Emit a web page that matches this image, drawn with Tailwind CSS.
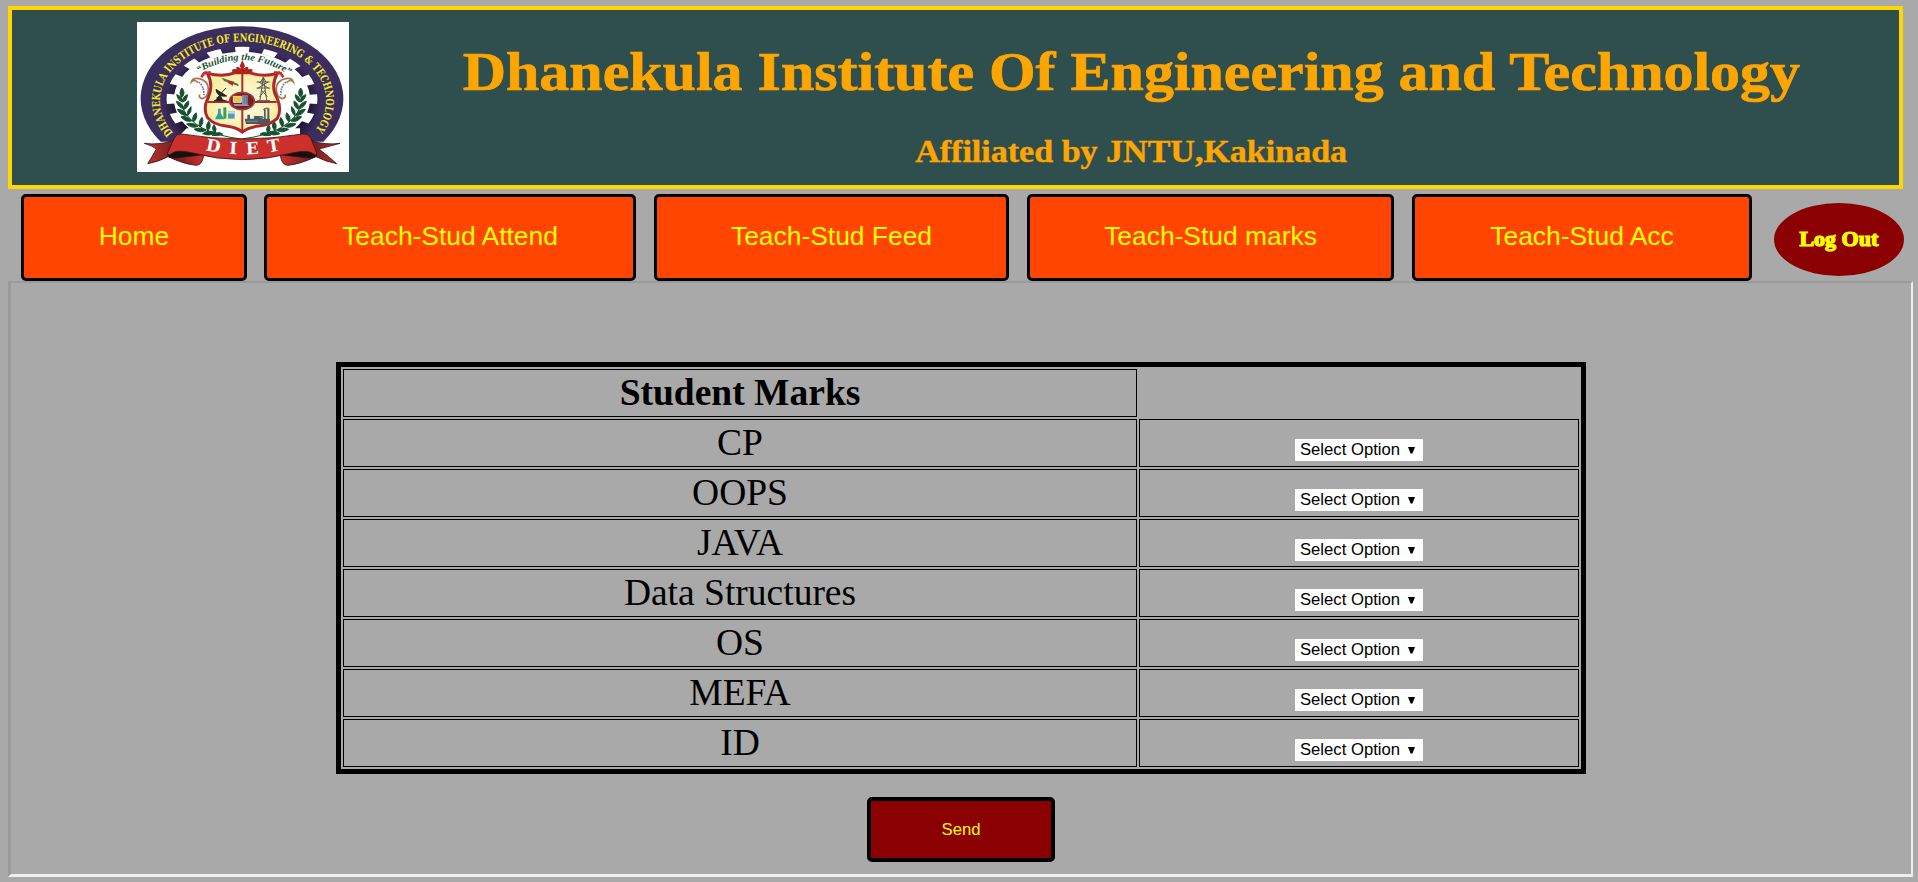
<!DOCTYPE html>
<html lang="en">
<head>
<meta charset="utf-8">
<title>Student Marks</title>
<script src="https://cdn.jsdelivr.net/npm/@tailwindcss/browser@4"></script>
</head>
<body class="h-[882px] overflow-hidden bg-[#a9a9a9] pt-1.5 pl-2 font-['Liberation_Sans',sans-serif]">
<header class="flex h-[183px] w-[1895px] border-4 border-[#ffd700] bg-[#2f4f4f] pt-3 pl-[125px] text-[#ffa500]">
  <svg class="h-[150px] w-[212px] shrink-0" viewBox="411 66 636 450" preserveAspectRatio="none">
    <defs>
      <path id="ring" d="M520 399 A249 178 0 1 1 938 399"/>
      <path id="motto" d="M596 219 Q727 140 862 221"/>
      <path id="band" d="M616 450 Q727 476 846 450"/>
      <g id="laurel" fill="#17512f" stroke="#17512f" stroke-width="3" stroke-linejoin="round">
        <path d="M546 320 Q580 400 724 417" fill="none"/>
        <path d="M546 264q-12 14 0 28q12-14 0-28zM530 284q4 18 18 22q-1-18-18-22zM562 284q-14 4-14 22q14-4 14-22zM529 304q6 20 23 22q-4-18-23-22zM566 303q-16 8-13 25q15-8 13-25zM532 328q10 20 29 18q-8-18-29-18zM573 320q-14 12-10 27q14-12 10-27zM543 350q13 18 32 13q-12-17-32-13zM588 338q-15 14-8 28q15-12 8-28zM560 372q16 15 34 7q-15-14-34-7zM606 352q-13 15-6 29q14-13 6-29zM582 388q19 13 36 3q-18-12-36-3zM626 364q-12 15-2 28q12-14 2-28zM608 401q22 9 37-3q-20-10-37 3zM642 374q-10 14 4 25q6-13-4-25zM636 406q18 4 32-4q-16-10-32 4z"/>
      </g>
      <linearGradient id="tail"><stop stop-color="#c8322e"/><stop offset=".55" stop-color="#6d1f20"/><stop offset="1" stop-color="#cf302c"/></linearGradient>
      <radialGradient id="cream"><stop stop-color="#fffef0"/><stop offset="1" stop-color="#f7eda0"/></radialGradient>
      <radialGradient id="rim" gradientUnits="userSpaceOnUse" cx="0" cy="0" r="1" gradientTransform="translate(726 312) scale(304 217)"><stop offset=".62" stop-color="#171126"/><stop offset=".78" stop-color="#3c2d60"/></radialGradient>
    </defs>
    <rect x="411" y="66" width="636" height="450" fill="#fff"/>
    <path d="M482 425 A304 217 0 1 1 970 425Z" fill="url(#rim)"/>
    <g transform="translate(726 297) scale(2.02 1.4)">
      <circle r="101" fill="#fff"/>
      <circle r="106" fill="none" stroke="#fff" stroke-width="12" pathLength="32" stroke-dasharray="1 1" stroke-dashoffset=".5"/>
    </g>
    <path d="M560 385H900V425H520Z" fill="#fff"/>
    <text fill="#f4ec27" font-family="DejaVu Serif" font-weight="bold" font-size="33"><textPath href="#ring" textLength="876" lengthAdjust="spacingAndGlyphs">DHANEKULA INSTITUTE OF ENGINEERING &amp; TECHNOLOGY</textPath></text>
    <text fill="#17512f" font-family="Liberation Serif" font-weight="bold" font-style="italic" font-size="29"><textPath href="#motto" textLength="288" lengthAdjust="spacingAndGlyphs">“Building the Future”</textPath></text>
    <use href="#laurel"/>
    <use href="#laurel" transform="translate(1448 0) scale(-1 1)"/>
    <g fill="none" stroke="#a17a45" stroke-width="5">
      <path d="M594 248q-10-12-20-2q4-14 24-10q26 6 27 31q0 25-18 29q-12-2-8-12"/>
      <path d="M860 248q10-12 20-2q-4-14-24-10q-26 6-27 31q0 25 18 29q12-2 8-12"/>
    </g>
    <g fill="none" stroke="#6f6aa8" stroke-width="5" stroke-dasharray="5 3">
      <path d="M596 247q15 8 16 39M858 247q-15 8-16 39"/>
    </g>
    <path d="M622 220Q670 232 706 218H748Q790 232 832 220Q810 260 832 296Q846 330 832 355Q812 374 776 378Q744 382 727 396Q710 382 678 378Q640 374 622 352Q608 324 624 294Q642 256 622 220Z" fill="url(#cream)" stroke="#ad2828" stroke-width="9"/>
    <path d="M727 216V392M624 306H830" stroke="#b02a28" stroke-width="6"/>
    <path d="M727 180l8 18l-5 8q18-12 15 2q16-4 12 8l-30 6l-30-6q-4-12 12-8q-3-14 15-2l-5-8z" fill="#b3211f"/>
    <path d="M604 232l8-12l20-3M850 232l-8-12l-20-3" fill="none" stroke="#d8281f" stroke-width="8"/>
    <ellipse cx="726" cy="303" rx="37" ry="26" fill="#6c2526" stroke="#b53331" stroke-width="5"/>
    <path d="M700 289h24v18h-24z" fill="#f6c427" stroke="#ddd" stroke-width="3"/>
    <path d="M726 286h17v26h-17zM700 312h42l6 6h-44z" fill="#8d94b5"/>
    <path d="M733 288v23M739 288v23" stroke="#4c5378" stroke-width="2"/>
    <path d="M648 268q2 24 32 20zM661 282l17-18M642 302h38M660 284l-14 18h22zM650 292l24 10" stroke="#252525" stroke-width="3" fill="#252525"/>
    <path d="M664 233l20 6l4 10l-15-5zM700 246l15 6v7l-15-6z" fill="#55784b"/>
    <path d="M683 240l20 5l-5 12l-13-7z" fill="#b62d25"/>
    <path d="M790 232L780 300M790 232L800 300M770 246H809M770 264H809M776 246l32 20M804 246l-32 20M784 270l18 20M796 270l-18 20M772 302H810M782 246l8-14l8 14" fill="none" stroke="#565656" stroke-width="3"/>
    <path d="M654 326h8v14l11 18h-28l9-18z" fill="#26a3a0"/>
    <path d="M670 322h9v34h-9z" fill="#36a53d"/>
    <path d="M684 334h20v22h-20z" fill="#4d9fb9"/>
    <path d="M684 334h20v7h-20z" fill="#b9dfe3"/>
    <path d="M734 356h76v16h-72zM742 344h8v14h-8zM762 348h26v12h-26zM792 324h5v35h-5zM802 326h6v34h-6z" fill="#505761"/>
    <path d="M740 364h34M778 352h20" stroke="#4f89a8" stroke-width="4"/>
    <path d="M790 330q8-9 18-3" fill="none" stroke="#777" stroke-width="4"/>
    <g stroke="#351313" stroke-width="2.5" stroke-linejoin="round">
      <path d="M520 422Q476 436 433 430Q457 437 469 447Q457 469 443 491Q477 485 504 470Q551 492 588 496Q607 496 611 466L528 440Z" fill="url(#tail)"/>
      <path d="M932 422Q978 436 1020 430Q996 437 957 447Q986 469 1010 491Q977 485 948 470Q901 492 864 496Q845 496 841 466L925 440Z" fill="url(#tail)"/>
      <path d="M503 461Q500 474 524 474Q560 470 611 464V452L520 450Z" fill="#16110f"/>
      <path d="M949 461Q952 474 928 474Q892 470 841 464V452L932 450Z" fill="#16110f"/>
      <path d="M545 402Q726 432 908 402Q924 400 932 414L950 458Q949 470 938 460Q922 450 881 458Q726 500 574 458Q531 448 516 460Q502 470 503 458L522 416Q530 400 545 402Z" fill="#cb302c"/>
    </g>
    <text fill="#fff" font-family="DejaVu Serif" font-weight="bold" font-size="50"><textPath href="#band" textLength="228">DIET</textPath></text>
  </svg>
  <div class="ml-[92px] flex w-[1380px] flex-col items-center font-['Liberation_Serif',serif] font-bold whitespace-nowrap">
    <h1 class="mt-[18px] origin-center scale-x-[1.11] text-[54px] leading-[64px] [-webkit-text-stroke:0.7px_#ffa500]">Dhanekula Institute Of Engineering and Technology</h1>
    <h2 class="mt-[29px] origin-center scale-x-[1.063] text-[32px] leading-[36px] [-webkit-text-stroke:0.4px_#ffa500]">Affiliated by JNTU,Kakinada</h2>
  </div>
</header>
<nav class="mt-[5px] flex h-[87px] pl-[13px] text-[26.4px] text-[#ffff00]">
  <a class="flex h-[87px] w-[226px] items-center justify-center rounded-[5px] border-3 border-black bg-[#ff4500] pb-[2px]">Home</a>
  <a class="ml-[17px] flex h-[87px] w-[372px] items-center justify-center rounded-[5px] border-3 border-black bg-[#ff4500] pb-[2px]">Teach-Stud Attend</a>
  <a class="ml-[18px] flex h-[87px] w-[355px] items-center justify-center rounded-[5px] border-3 border-black bg-[#ff4500] pb-[2px]">Teach-Stud Feed</a>
  <a class="ml-[18px] flex h-[87px] w-[367px] items-center justify-center rounded-[5px] border-3 border-black bg-[#ff4500] pb-[2px]">Teach-Stud marks</a>
  <a class="ml-[18px] flex h-[87px] w-[340px] items-center justify-center rounded-[5px] border-3 border-black bg-[#ff4500] pb-[2px]">Teach-Stud Acc</a>
  <a class="mt-[9px] ml-[22px] flex h-[73px] w-[130px] items-center justify-center rounded-[50%] bg-[#8b0000] pb-[2px] font-['Liberation_Serif',serif] text-[20px] font-bold [-webkit-text-stroke:1.2px_#ffff00]"><span class="scale-x-[1.1]">Log Out</span></a>
</nav>
<main class="flex h-[596px] w-[1905px] flex-col items-center border-t-2 border-r-2 border-b-3 border-l-3 border-t-[#9a9a9a] border-r-[#eeeeee] border-b-[#eeeeee] border-l-[#9a9a9a] pt-[79px]">
  <table class="h-[412px] w-[1250px] table-fixed border-separate border-spacing-[2px] border-5 border-black text-center font-['Liberation_Serif',serif] text-[37.5px] leading-[43px]">
    <colgroup><col class="w-[794px]"><col class="w-[440px]"></colgroup>
    <tbody id="rows">
      <tr class="h-12"><th class="border border-black p-0 pb-[2px]">Student Marks</th></tr>
    </tbody>
  </table>
  <button class="mt-[23px] h-[65px] w-[188px] rounded-[5px] border-4 border-black bg-[#8b0000] text-[16.67px] text-[#ffff00]">Send</button>
</main>
<script>
const rows = document.getElementById('rows');
for (const subject of ['CP', 'OOPS', 'JAVA', 'Data Structures', 'OS', 'MEFA', 'ID']) {
  rows.insertAdjacentHTML('beforeend', `<tr class="h-12">
    <td class="border border-black p-0 pb-[2px]">${subject}</td>
    <td class="border border-black p-0 align-bottom">
      <div class="mx-auto mb-[5px] flex h-[22px] w-[128px] items-center bg-white pl-[5px] font-['Liberation_Sans',sans-serif] text-[16.67px] leading-[22px]">
        <span>Select Option</span>
        <svg class="ml-[8px] h-[7px] w-[7px]" viewBox="0 0 7 7"><path d="M0 0H7L4.4 6.5H2.6Z"/></svg>
      </div>
    </td></tr>`);
}
</script>
</body>
</html>
